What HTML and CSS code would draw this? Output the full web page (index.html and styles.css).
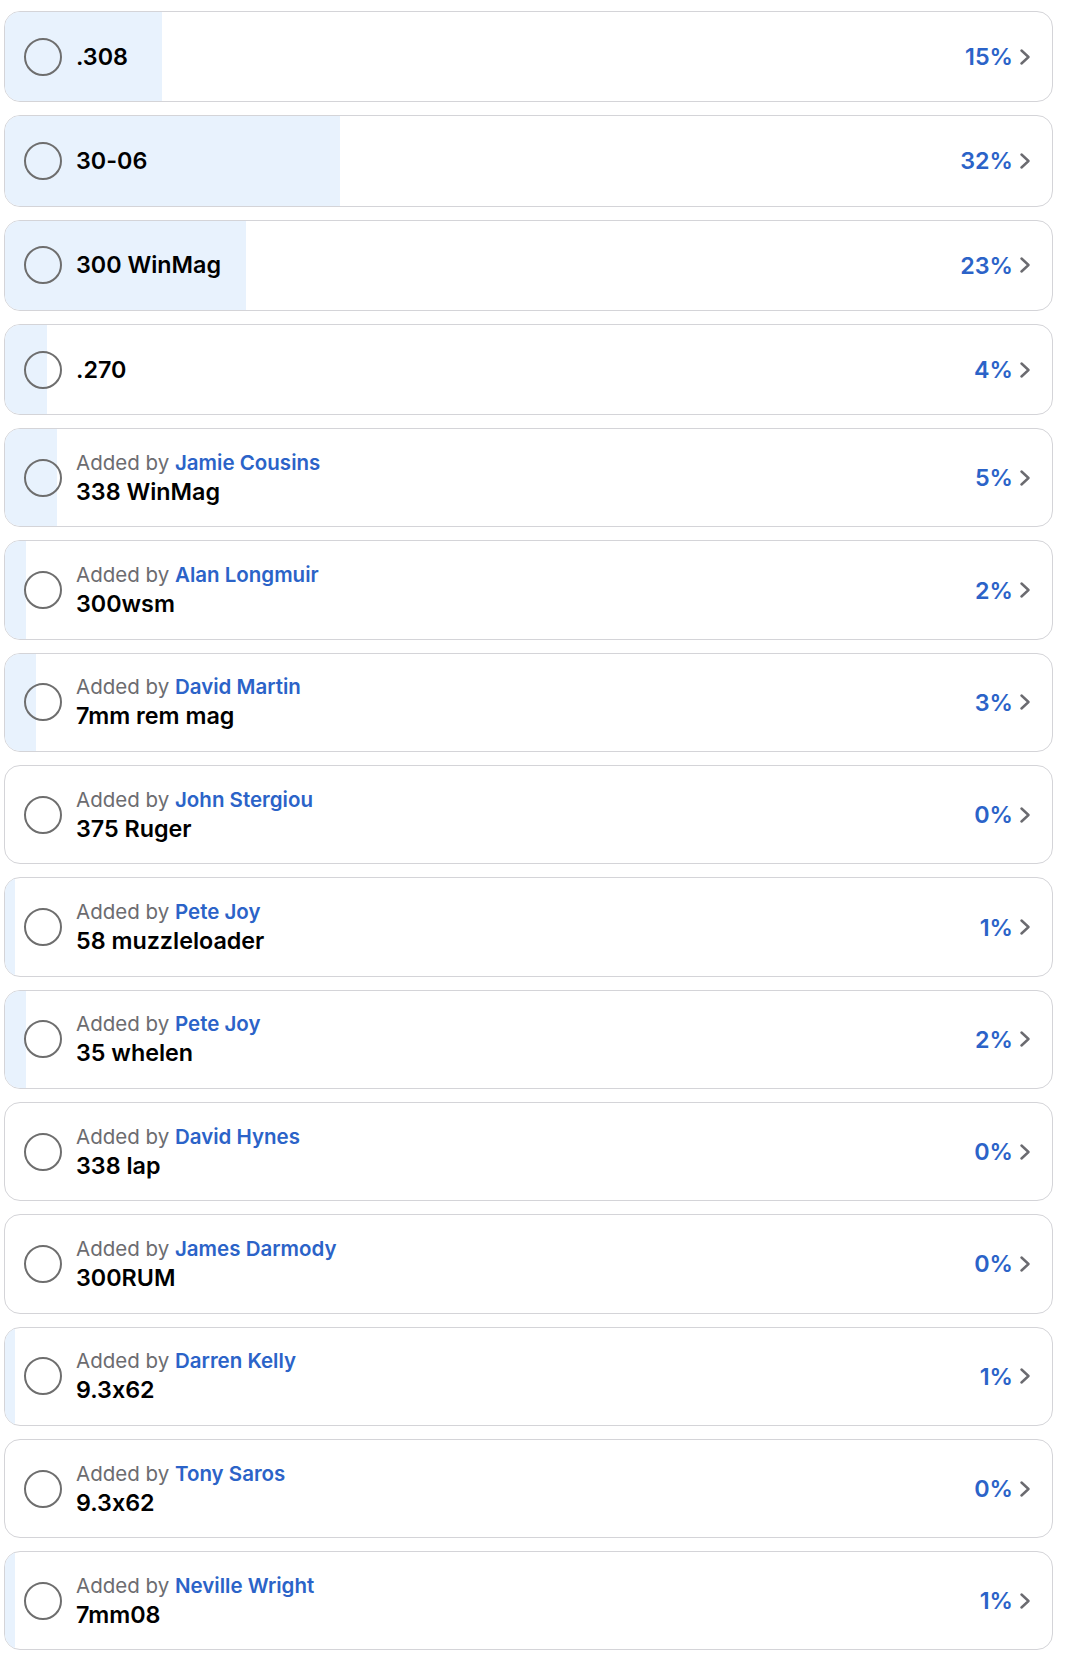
FILE: index.html
```html
<!DOCTYPE html>
<html>
<head>
	<meta charset="utf-8">
	<link rel="stylesheet" href="styles.css">
</head>
<body>
	<div class="poll">
		<div class="option">
			<div class="fill" style="width: 15%"></div>
			<span class="radio"></span>
			<div class="label"><div class="title">.308</div></div>
			<span class="pct">15%</span><span class="chev"><svg viewBox="0 0 10 16"><path d="M1.5 1.5l7 6.5-7 6.5"/></svg></span>
		</div>
		<div class="option">
			<div class="fill" style="width: 32%"></div>
			<span class="radio"></span>
			<div class="label"><div class="title">30-06</div></div>
			<span class="pct">32%</span><span class="chev"><svg viewBox="0 0 10 16"><path d="M1.5 1.5l7 6.5-7 6.5"/></svg></span>
		</div>
		<div class="option">
			<div class="fill" style="width: 23%"></div>
			<span class="radio"></span>
			<div class="label"><div class="title">300 WinMag</div></div>
			<span class="pct">23%</span><span class="chev"><svg viewBox="0 0 10 16"><path d="M1.5 1.5l7 6.5-7 6.5"/></svg></span>
		</div>
		<div class="option">
			<div class="fill" style="width: 4%"></div>
			<span class="radio"></span>
			<div class="label"><div class="title">.270</div></div>
			<span class="pct">4%</span><span class="chev"><svg viewBox="0 0 10 16"><path d="M1.5 1.5l7 6.5-7 6.5"/></svg></span>
		</div>
		<div class="option added">
			<div class="fill" style="width: 5%"></div>
			<span class="radio"></span>
			<div class="label"><div class="by">Added by <span class="name">Jamie Cousins</span></div><div class="title">338 WinMag</div></div>
			<span class="pct">5%</span><span class="chev"><svg viewBox="0 0 10 16"><path d="M1.5 1.5l7 6.5-7 6.5"/></svg></span>
		</div>
		<div class="option added">
			<div class="fill" style="width: 2%"></div>
			<span class="radio"></span>
			<div class="label"><div class="by">Added by <span class="name">Alan Longmuir</span></div><div class="title">300wsm</div></div>
			<span class="pct">2%</span><span class="chev"><svg viewBox="0 0 10 16"><path d="M1.5 1.5l7 6.5-7 6.5"/></svg></span>
		</div>
		<div class="option added">
			<div class="fill" style="width: 3%"></div>
			<span class="radio"></span>
			<div class="label"><div class="by">Added by <span class="name">David Martin</span></div><div class="title">7mm rem mag</div></div>
			<span class="pct">3%</span><span class="chev"><svg viewBox="0 0 10 16"><path d="M1.5 1.5l7 6.5-7 6.5"/></svg></span>
		</div>
		<div class="option added">
			<div class="fill" style="width: 0%"></div>
			<span class="radio"></span>
			<div class="label"><div class="by">Added by <span class="name">John Stergiou</span></div><div class="title">375 Ruger</div></div>
			<span class="pct">0%</span><span class="chev"><svg viewBox="0 0 10 16"><path d="M1.5 1.5l7 6.5-7 6.5"/></svg></span>
		</div>
		<div class="option added">
			<div class="fill" style="width: 1%"></div>
			<span class="radio"></span>
			<div class="label"><div class="by">Added by <span class="name">Pete Joy</span></div><div class="title">58 muzzleloader</div></div>
			<span class="pct">1%</span><span class="chev"><svg viewBox="0 0 10 16"><path d="M1.5 1.5l7 6.5-7 6.5"/></svg></span>
		</div>
		<div class="option added">
			<div class="fill" style="width: 2%"></div>
			<span class="radio"></span>
			<div class="label"><div class="by">Added by <span class="name">Pete Joy</span></div><div class="title">35 whelen</div></div>
			<span class="pct">2%</span><span class="chev"><svg viewBox="0 0 10 16"><path d="M1.5 1.5l7 6.5-7 6.5"/></svg></span>
		</div>
		<div class="option added">
			<div class="fill" style="width: 0%"></div>
			<span class="radio"></span>
			<div class="label"><div class="by">Added by <span class="name">David Hynes</span></div><div class="title">338 lap</div></div>
			<span class="pct">0%</span><span class="chev"><svg viewBox="0 0 10 16"><path d="M1.5 1.5l7 6.5-7 6.5"/></svg></span>
		</div>
		<div class="option added">
			<div class="fill" style="width: 0%"></div>
			<span class="radio"></span>
			<div class="label"><div class="by">Added by <span class="name">James Darmody</span></div><div class="title">300RUM</div></div>
			<span class="pct">0%</span><span class="chev"><svg viewBox="0 0 10 16"><path d="M1.5 1.5l7 6.5-7 6.5"/></svg></span>
		</div>
		<div class="option added">
			<div class="fill" style="width: 1%"></div>
			<span class="radio"></span>
			<div class="label"><div class="by">Added by <span class="name">Darren Kelly</span></div><div class="title">9.3x62</div></div>
			<span class="pct">1%</span><span class="chev"><svg viewBox="0 0 10 16"><path d="M1.5 1.5l7 6.5-7 6.5"/></svg></span>
		</div>
		<div class="option added">
			<div class="fill" style="width: 0%"></div>
			<span class="radio"></span>
			<div class="label"><div class="by">Added by <span class="name">Tony Saros</span></div><div class="title">9.3x62</div></div>
			<span class="pct">0%</span><span class="chev"><svg viewBox="0 0 10 16"><path d="M1.5 1.5l7 6.5-7 6.5"/></svg></span>
		</div>
		<div class="option added">
			<div class="fill" style="width: 1%"></div>
			<span class="radio"></span>
			<div class="label"><div class="by">Added by <span class="name">Neville Wright</span></div><div class="title">7mm08</div></div>
			<span class="pct">1%</span><span class="chev"><svg viewBox="0 0 10 16"><path d="M1.5 1.5l7 6.5-7 6.5"/></svg></span>
		</div>
	</div>
</body>
</html>
```

FILE: styles.css
```css
body {
	margin: 0;
	padding: 0;
	background: #ffffff;
	font-family: 'Inter', 'Noto Sans', sans-serif;
	font-feature-settings: "calt" 0;
	color: #000000;
}

.poll {
	display: flex;
	flex-direction: column;
	gap: 13px;
	width: 1049px;
	padding: 11px 0 0 4px;
}

.option {
	position: relative;
	display: flex;
	align-items: center;
	box-sizing: border-box;
	height: 91.3px;
	padding: 0 22px 0 19px;
	border: 1px solid #d4d4d8;
	border-radius: 16px;
	overflow: hidden;
	background: #ffffff;
}

.option.added {
	height: 99.3px;
}

.fill {
	position: absolute;
	top: 0;
	bottom: 0;
	left: 0;
	background: #e8f2fd;
}

.radio {
	position: relative;
	flex: none;
	box-sizing: border-box;
	width: 38px;
	height: 38px;
	border: 2.5px solid #6e6e6e;
	border-radius: 50%;
}

.label {
	position: relative;
	flex: 1;
	margin-left: 14px;
}

.title {
	font-size: 23.3px;
	font-weight: 600;
	line-height: 30px;
}

.by {
	font-size: 20.5px;
	line-height: 28px;
	color: #6c6c70;
}

.name {
	color: #2b63c8;
	font-weight: 600;
}

.pct {
	position: relative;
	font-size: 23.3px;
	font-weight: 600;
	color: #2b63c8;
}

.chev {
	position: relative;
	display: flex;
	margin-left: 7px;
}

.chev svg {
	width: 10px;
	height: 16px;
	fill: none;
	stroke: #6b6b70;
	stroke-width: 2.4;
	stroke-linecap: round;
	stroke-linejoin: round;
}
```
